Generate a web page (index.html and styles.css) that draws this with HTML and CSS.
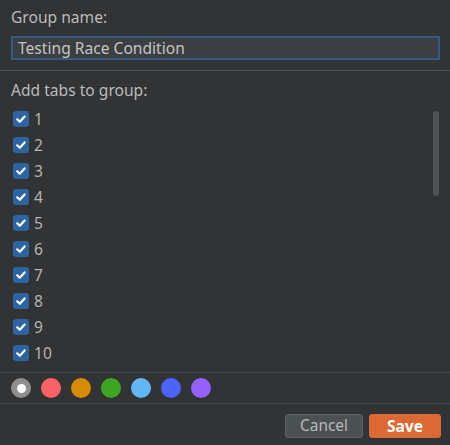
FILE: index.html
```html
<!DOCTYPE html>
<html>
<head>
<meta charset="utf-8">
<link rel="stylesheet" href="styles.css">
</head>
<body>
<div class="dialog">
  <div class="top">
    <div class="label">Group name:</div>
    <div class="input">Testing Race Condition</div>
  </div>
  <div class="sep"></div>
  <div class="tabs">
    <div class="label">Add tabs to group:</div>
    <div class="list">
      <div class="row"><span class="cb"><svg viewBox="0 0 16 16" width="16" height="16"><path d="M4.2 8.3 L6.8 10.8 L11.6 5.4" fill="none" stroke="#fff" stroke-width="2.2" stroke-linecap="round" stroke-linejoin="round"/></svg></span><span class="num">1</span></div>
      <div class="row"><span class="cb"><svg viewBox="0 0 16 16" width="16" height="16"><path d="M4.2 8.3 L6.8 10.8 L11.6 5.4" fill="none" stroke="#fff" stroke-width="2.2" stroke-linecap="round" stroke-linejoin="round"/></svg></span><span class="num">2</span></div>
      <div class="row"><span class="cb"><svg viewBox="0 0 16 16" width="16" height="16"><path d="M4.2 8.3 L6.8 10.8 L11.6 5.4" fill="none" stroke="#fff" stroke-width="2.2" stroke-linecap="round" stroke-linejoin="round"/></svg></span><span class="num">3</span></div>
      <div class="row"><span class="cb"><svg viewBox="0 0 16 16" width="16" height="16"><path d="M4.2 8.3 L6.8 10.8 L11.6 5.4" fill="none" stroke="#fff" stroke-width="2.2" stroke-linecap="round" stroke-linejoin="round"/></svg></span><span class="num">4</span></div>
      <div class="row"><span class="cb"><svg viewBox="0 0 16 16" width="16" height="16"><path d="M4.2 8.3 L6.8 10.8 L11.6 5.4" fill="none" stroke="#fff" stroke-width="2.2" stroke-linecap="round" stroke-linejoin="round"/></svg></span><span class="num">5</span></div>
      <div class="row"><span class="cb"><svg viewBox="0 0 16 16" width="16" height="16"><path d="M4.2 8.3 L6.8 10.8 L11.6 5.4" fill="none" stroke="#fff" stroke-width="2.2" stroke-linecap="round" stroke-linejoin="round"/></svg></span><span class="num">6</span></div>
      <div class="row"><span class="cb"><svg viewBox="0 0 16 16" width="16" height="16"><path d="M4.2 8.3 L6.8 10.8 L11.6 5.4" fill="none" stroke="#fff" stroke-width="2.2" stroke-linecap="round" stroke-linejoin="round"/></svg></span><span class="num">7</span></div>
      <div class="row"><span class="cb"><svg viewBox="0 0 16 16" width="16" height="16"><path d="M4.2 8.3 L6.8 10.8 L11.6 5.4" fill="none" stroke="#fff" stroke-width="2.2" stroke-linecap="round" stroke-linejoin="round"/></svg></span><span class="num">8</span></div>
      <div class="row"><span class="cb"><svg viewBox="0 0 16 16" width="16" height="16"><path d="M4.2 8.3 L6.8 10.8 L11.6 5.4" fill="none" stroke="#fff" stroke-width="2.2" stroke-linecap="round" stroke-linejoin="round"/></svg></span><span class="num">9</span></div>
      <div class="row"><span class="cb"><svg viewBox="0 0 16 16" width="16" height="16"><path d="M4.2 8.3 L6.8 10.8 L11.6 5.4" fill="none" stroke="#fff" stroke-width="2.2" stroke-linecap="round" stroke-linejoin="round"/></svg></span><span class="num">10</span></div>
      <div class="scrollbar"></div>
    </div>
  </div>
  <div class="sep sep2"></div>
  <div class="colors">
    <span class="dot gray"><span class="inner"></span></span>
    <span class="dot red"></span>
    <span class="dot orange"></span>
    <span class="dot green"></span>
    <span class="dot sky"></span>
    <span class="dot blue"></span>
    <span class="dot purple"></span>
  </div>
  <div class="sep sep2"></div>
  <div class="footer">
    <button class="btn cancel">Cancel</button>
    <button class="btn save">Save</button>
  </div>
</div>
</body>
</html>
```
FILE: styles.css
```css
html, body {
  margin: 0;
  padding: 0;
  background: #313335;
}
body {
  width: 450px;
  height: 445px;
  overflow: hidden;
  font-family: "Noto Sans", "Open Sans", sans-serif;
  font-size: 15.6px;
  color: #bbbbbb;
}
.dialog {
  display: flex;
  flex-direction: column;
  height: 445px;
}
.top {
  padding: 7px 10px 10px 11px;
  display: flex;
  flex-direction: column;
  gap: 9px;
}
.label {
  line-height: 20px;
  height: 20px;
}
.input {
  height: 20px;
  line-height: 20px;
  border: 2px solid #385a80;
  background: #3c3f41;
  padding: 0 5px;
  color: #c4c4c4;
}
.sep {
  height: 1px;
  background: #4e5052;
  flex: none;
}
.sep2 {
  background: #48494b;
}
.tabs {
  padding: 9px 11px 6px 11px;
}
.list {
  position: relative;
  margin-top: 6px;
}
.row {
  height: 26px;
  display: flex;
  align-items: center;
  gap: 5px;
  padding-left: 2px;
}
.cb {
  width: 16px;
  height: 16px;
  border-radius: 3px;
  background: #2b64a1;
  display: flex;
}
.num {
  color: #b4b4b4;
}
.scrollbar {
  position: absolute;
  left: 422px;
  top: 5px;
  width: 6px;
  height: 85px;
  border-radius: 3px;
  background: #505355;
}
.colors {
  height: 30px;
  display: flex;
  align-items: center;
  gap: 10px;
  padding-left: 11px;
}
.dot {
  width: 20px;
  height: 20px;
  border-radius: 50%;
  display: flex;
  align-items: center;
  justify-content: center;
}
.gray { background: #8f8f8f; }
.inner {
  width: 9px;
  height: 9px;
  border-radius: 50%;
  background: #ffffff;
}
.red { background: #ff6266; }
.orange { background: #d68b00; }
.green { background: #3da522; }
.sky { background: #62b6f4; }
.blue { background: #4c63fe; }
.purple { background: #9460fe; }
.footer {
  display: flex;
  justify-content: flex-end;
  gap: 6px;
  padding: 10px 9px 0 0;
}
.btn {
  height: 24px;
  border-radius: 3px;
  font-family: "Noto Sans", "Open Sans", sans-serif;
  font-size: 15.4px;
  padding: 0;
  line-height: 20px;
}
.cancel {
  width: 78px;
  background: #4b5052;
  border: 1px solid #5e6164;
  color: #b8b8b8;
}
.save {
  width: 72px;
  background: #db6933;
  border: 1px solid #db6933;
  color: #ffffff;
  font-weight: bold;
  font-size: 15.6px;
}
```
